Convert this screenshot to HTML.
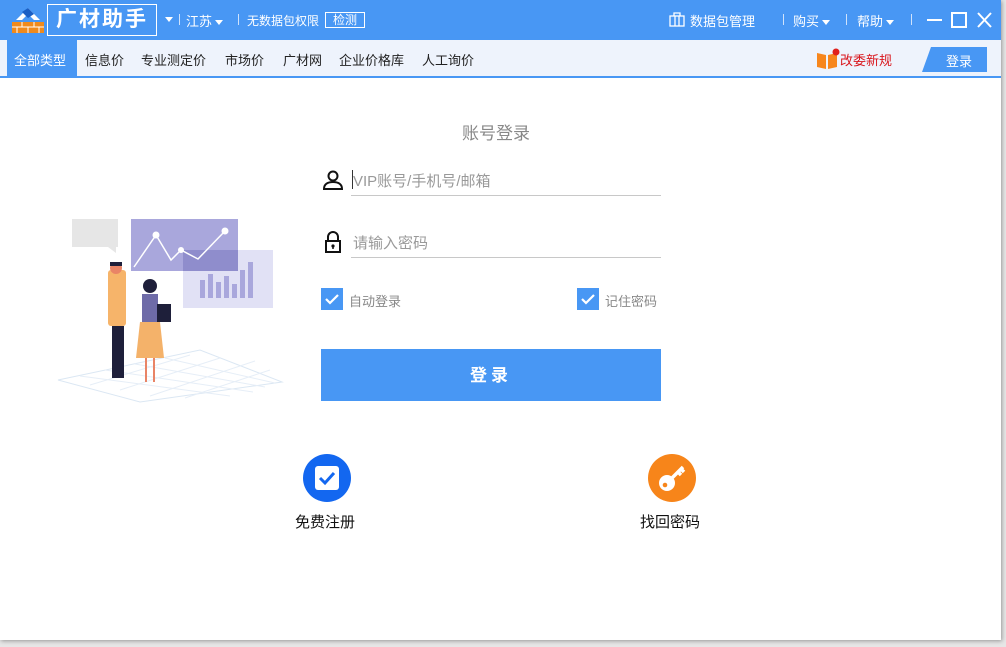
<!DOCTYPE html>
<html><head><meta charset="utf-8"><style>
*{margin:0;padding:0;box-sizing:border-box}
body{width:1006px;height:647px;background:#e6e6e6;font-family:"Liberation Sans","Noto Sans CJK SC",sans-serif;position:relative;overflow:hidden}
.win{position:absolute;left:0;top:0;width:1001px;height:640px;background:#fff;box-shadow:1px 1px 4px rgba(0,0,0,.35)}
.top{position:absolute;left:0;top:0;width:1001px;height:40px;background:#4897f4;color:#fff;font-size:13px}
.a{position:absolute;white-space:nowrap}
.nav{position:absolute;left:0;top:40px;width:1001px;height:38px;background:#eef3fc;border-bottom:2px solid #4897f4;font-size:13px;color:#222}
.nav span{position:absolute;top:10px}
.tri{display:inline-block;width:0;height:0;border-left:4px solid transparent;border-right:4px solid transparent;border-top:5px solid #fff;vertical-align:middle;margin-left:3px}
.sep{position:absolute;top:14px;width:1px;height:11px;background:#cfe2fb}
.line{position:absolute;left:351px;width:310px;height:1px;background:#c8c8c8}
.ph{position:absolute;font-size:15px;color:#999}
.cb{position:absolute;width:22px;height:22px;background:#4897f4}
.small{position:absolute;font-size:13px;color:#888}
</style></head><body>
<div class="win">
<div class="top">
 <svg class="a" style="left:10px;top:6px" width="36" height="28" viewBox="0 0 36 28"><path d="M6 14 L18 2 L30 14 L24 14 L18 8 L12 14Z" fill="#fff"/><path d="M12 6 L18 2 L24 8 L18 12Z" fill="#1b5fc4"/><rect x="2" y="16" width="32" height="11" fill="#f08a1c"/><path d="M2 21h32M12 16v5M24 16v5M7 21v6M18 21v6M29 21v6" stroke="#fff" stroke-width="1"/></svg>
 <div class="a" style="left:47px;top:4px;width:110px;height:32px;border:1px solid #fff;font-size:21px;font-weight:bold;padding-left:8px;line-height:30px;letter-spacing:2px">广材助手</div>
 <span class="a" style="left:162px;top:11px"><span class="tri"></span></span>
 <div class="sep" style="left:179px"></div>
 <span class="a" style="left:186px;top:11px">江苏<span class="tri"></span></span>
 <div class="sep" style="left:238px"></div>
 <span class="a" style="left:247px;top:12px;font-size:12px">无数据包权限</span>
 <span class="a" style="left:325px;top:12px;border:1px solid #fff;font-size:12px;padding:0 7px;line-height:14px">检测</span>
 <svg class="a" style="left:669px;top:12px" width="16" height="15" viewBox="0 0 16 15"><rect x="1" y="4" width="14" height="10" fill="none" stroke="#fff" stroke-width="1.3"/><path d="M5 4V1h6v3M6 4v10M10 4v10" fill="none" stroke="#fff" stroke-width="1.3"/></svg>
 <span class="a" style="left:690px;top:11px">数据包管理</span>
 <div class="sep" style="left:783px"></div>
 <span class="a" style="left:793px;top:11px">购买<span class="tri"></span></span>
 <div class="sep" style="left:846px"></div>
 <span class="a" style="left:857px;top:11px">帮助<span class="tri"></span></span>
 <div class="sep" style="left:911px"></div>
 <svg class="a" style="left:925px;top:11px" width="70" height="18" viewBox="0 0 70 18"><path d="M2 9h15" stroke="#fff" stroke-width="2"/><rect x="27" y="2" width="14" height="14" fill="none" stroke="#fff" stroke-width="2"/><path d="M53 2l13 14M66 2L53 16" stroke="#fff" stroke-width="2"/></svg>
</div>
<div class="nav">
 <div style="position:absolute;left:7px;top:0;width:70px;height:38px;background:#4897f4"></div>
 <span style="left:14px;color:#fff">全部类型</span>
 <span style="left:85px">信息价</span>
 <span style="left:141px">专业测定价</span>
 <span style="left:225px">市场价</span>
 <span style="left:283px">广材网</span>
 <span style="left:339px">企业价格库</span>
 <span style="left:422px">人工询价</span>
 <svg style="position:absolute;left:816px;top:8px" width="24" height="22" viewBox="0 0 24 22"><path d="M1 5l9 2v14l-9-2z M12 7l9-2v14l-9 2z" fill="#f7861c"/><circle cx="20" cy="4" r="3.5" fill="#e0201c"/></svg>
 <span style="left:840px;color:#d9161c">改委新规</span>
 <div style="position:absolute;left:922px;top:7px;width:65px;height:25px;background:#4897f4;clip-path:polygon(9px 0,100% 0,100% 100%,0 100%)"></div>
 <span style="left:946px;top:11px;color:#fff">登录</span>
</div>
<svg class="a" style="left:50px;top:210px" width="240" height="195" viewBox="0 0 240 195">
 <path d="M8 170 L150 140 L232 172 L90 192Z" fill="none" stroke="#dbe7f3" stroke-width="1"/>
 <path d="M30 166l150 20M55 160l148 22M85 154l130 23M115 148l110 25M40 175l100 -30M70 180l100 -32M100 186l105 -35M135 188l85 -28" stroke="#e6eef7" stroke-width="1"/>
 <rect x="22" y="9" width="46" height="28" fill="#e6e6e6"/><path d="M58 37l8 6v-6z" fill="#e6e6e6"/>
 <rect x="81" y="9" width="107" height="52" fill="#a9a7dc"/>
 <rect x="133" y="40" width="90" height="58" fill="#d9d9f3" opacity=".8"/>
 <rect x="133" y="40" width="55" height="21" fill="#8f8dcc"/>
 <path d="M84 57 L106 25 L121 50 L131 40 L148 49 L175 21" stroke="#fff" stroke-width="1.5" fill="none"/>
 <circle cx="106" cy="25" r="3.5" fill="#fff"/><circle cx="131" cy="40" r="3" fill="#fff"/><circle cx="175" cy="21" r="3.5" fill="#fff"/>
 <g fill="#a9a7dc"><rect x="150" y="70" width="5" height="18"/><rect x="158" y="64" width="5" height="24"/><rect x="166" y="72" width="5" height="16"/><rect x="174" y="66" width="5" height="22"/><rect x="182" y="74" width="5" height="14"/><rect x="190" y="60" width="5" height="28"/><rect x="198" y="52" width="5" height="36"/></g>
 <rect x="58" y="60" width="18" height="56" fill="#f6b46a" rx="3"/><rect x="62" y="116" width="12" height="52" fill="#1e1f3a"/><circle cx="66" cy="58" r="6" fill="#e98466"/><path d="M60 52h12v4h-12z" fill="#1e1f3a"/>
 <rect x="92" y="84" width="16" height="30" fill="#6e6ba8"/><path d="M90 112h20l4 36h-28z" fill="#f4b26a"/><circle cx="100" cy="76" r="7" fill="#1e1f3a"/><rect x="107" y="94" width="14" height="18" fill="#1e1f3a"/><path d="M96 148v24M104 148v24" stroke="#e98466" stroke-width="2"/>
</svg>
<div class="a" style="left:462px;top:119px;font-size:17px;color:#888">账号登录</div>
<svg class="a" style="left:322px;top:169px" width="22" height="22" viewBox="0 0 22 22"><circle cx="11" cy="7" r="4.5" fill="none" stroke="#111" stroke-width="2"/><path d="M2 20c0-5 4-7 9-7s9 2 9 7z" fill="none" stroke="#111" stroke-width="2"/></svg>
<div class="a" style="left:352px;top:170px;width:1px;height:19px;background:#333"></div>
<div class="ph" style="left:353px;top:170px">VIP账号/手机号/邮箱</div>
<div class="line" style="top:195px"></div>
<svg class="a" style="left:324px;top:231px" width="18" height="22" viewBox="0 0 18 22"><path d="M4 10V6a5 5 0 0 1 10 0v4" fill="none" stroke="#111" stroke-width="2"/><rect x="2" y="10" width="14" height="11" fill="none" stroke="#111" stroke-width="2"/><circle cx="9" cy="15" r="1.6" fill="#111"/><path d="M9 15v3" stroke="#111" stroke-width="1.5"/></svg>
<div class="ph" style="left:353px;top:232px">请输入密码</div>
<div class="line" style="top:257px"></div>
<div class="cb" style="left:321px;top:288px"><svg width="22" height="22"><path d="M5 11l4 4 8-8" stroke="#fff" stroke-width="2.2" fill="none"/></svg></div>
<div class="small" style="left:349px;top:291px">自动登录</div>
<div class="cb" style="left:577px;top:288px"><svg width="22" height="22"><path d="M5 11l4 4 8-8" stroke="#fff" stroke-width="2.2" fill="none"/></svg></div>
<div class="small" style="left:605px;top:291px">记住密码</div>
<div class="a" style="left:321px;top:349px;width:340px;height:52px;background:#4897f4;color:#fff;font-size:17px;font-weight:bold;text-align:center;line-height:54px;letter-spacing:4px">登录</div>
<svg class="a" style="left:303px;top:454px" width="48" height="48" viewBox="0 0 48 48"><circle cx="24" cy="24" r="24" fill="#1367f0"/><rect x="12" y="12" width="24" height="24" rx="3" fill="#fff"/><path d="M17 24l5 5 9-10" stroke="#1367f0" stroke-width="3" fill="none"/></svg>
<div class="a" style="left:295px;top:511px;font-size:15px;color:#111">免费注册</div>
<svg class="a" style="left:648px;top:454px" width="48" height="48" viewBox="0 0 48 48"><circle cx="24" cy="24" r="24" fill="#f7851a"/><circle cx="19" cy="29" r="8" fill="#fff"/><path d="M23 25l12-12M30 18l3 3M33 15l3 3" stroke="#fff" stroke-width="3.5"/><circle cx="17" cy="31" r="2.3" fill="#f7851a"/></svg>
<div class="a" style="left:640px;top:511px;font-size:15px;color:#111">找回密码</div>
</div>
</body></html>
